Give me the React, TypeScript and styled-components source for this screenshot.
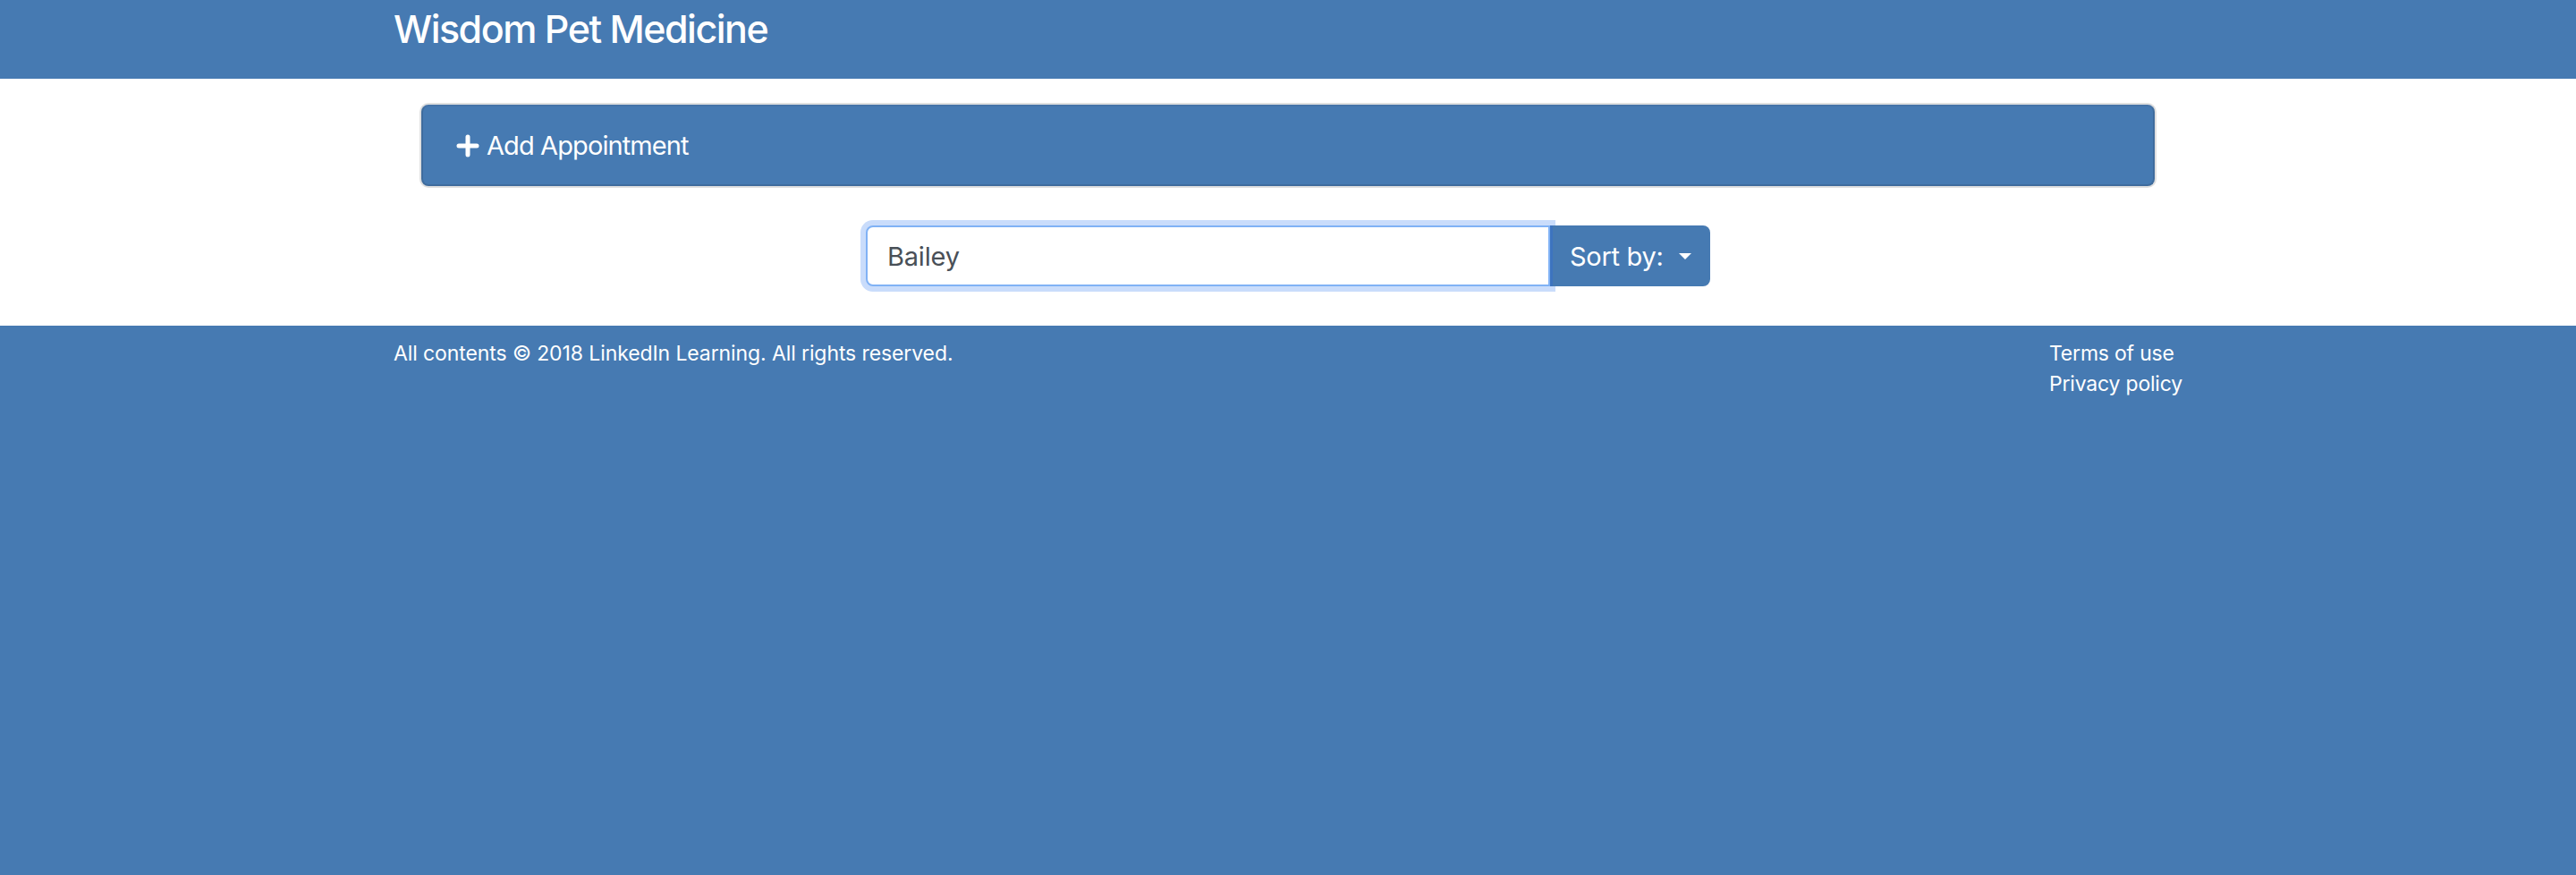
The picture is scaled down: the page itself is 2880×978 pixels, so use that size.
import React from "react";
import styled, { createGlobalStyle } from "styled-components";

const BLUE = "#467ab2";

const Global = createGlobalStyle`
  html, body { margin: 0; padding: 0; }
  body {
    background: ${BLUE};
    font-family: Inter, "Noto Sans", "Liberation Sans", sans-serif;
    -webkit-font-smoothing: antialiased;
  }
  * { box-sizing: border-box; }
`;

const Page = styled.div`
  display: flex;
  flex-direction: column;
  min-height: 978px;
`;

const Header = styled.header`
  background: ${BLUE};
  height: 88px;
`;

const Container = styled.div`
  width: 2000px;
  margin: 0 auto;
`;

const Brand = styled.h1`
  margin: 0;
  color: #fff;
  font-size: 43px;
  font-weight: 500;
  line-height: 64px;
  letter-spacing: -1.5px;
`;

const Main = styled.main`
  background: #fff;
  padding: 29px 0 44px;
`;

const Card = styled.div`
  width: 1938px;
  margin: 0 auto;
  height: 91px;
  background: ${BLUE};
  border: 2px solid #3f6c9d;
  border-top-color: #4573a8;
  border-radius: 8px;
  box-shadow: 0 0 0 2px #e0e0e0;
  display: flex;
  align-items: center;
  padding-left: 37px;
  color: #fff;
  font-size: 29px;
  letter-spacing: -0.9px;
`;

const PlusIcon = styled.svg`
  width: 26px;
  height: 26px;
  margin-right: 8px;
`;

const SearchRow = styled.div`
  display: flex;
  justify-content: center;
  margin-top: 44px;
`;

const Group = styled.div`
  display: flex;
  width: 944px;
  height: 68px;
`;

const Input = styled.input`
  flex: 1;
  height: 68px;
  border: 2px solid #80b2f5;
  border-radius: 8px 0 0 8px;
  box-shadow: 0 0 0 6px #c9dcfb;
  outline: none;
  padding: 0 22px;
  font-family: inherit;
  font-size: 29px;
  color: #495057;
  letter-spacing: -0.2px;
  position: relative;
  z-index: 1;
`;

const SortButton = styled.button`
  width: 179px;
  height: 68px;
  border: none;
  border-left: 3px solid #3d74bf;
  background: ${BLUE};
  color: #fff;
  border-radius: 0 8px 8px 0;
  font-family: inherit;
  font-size: 29px;
  letter-spacing: -0.3px;
  display: flex;
  align-items: center;
  padding: 0 0 0 19px;
  position: relative;
  z-index: 2;
`;

const Caret = styled.span`
  display: inline-block;
  margin-left: 18px;
  width: 0;
  height: 0;
  border-left: 7px solid transparent;
  border-right: 7px solid transparent;
  border-top: 7px solid #fff;
`;

const Footer = styled.footer`
  flex: 1;
  background: ${BLUE};
  padding-top: 14px;
  color: #fff;
  font-size: 23px;
  line-height: 34px;
`;

const FooterRow = styled.div`
  display: flex;
  justify-content: space-between;
`;

const Copy = styled.div`
  letter-spacing: -0.1px;
`;

const Links = styled.ul`
  list-style: none;
  margin: 0;
  padding: 0;
  width: 149px;
  letter-spacing: -0.2px;
`;

const LinkItem = styled.li`
  white-space: nowrap;
`;

export default function App() {
  return (
    <Page>
      <Global />
      <Header>
        <Container>
          <Brand>Wisdom Pet Medicine</Brand>
        </Container>
      </Header>
      <Main>
        <Card>
          <PlusIcon viewBox="0 0 26 26">
            <path d="M13 3v20M3 13h20" stroke="#fff" strokeWidth="5" strokeLinecap="round" />
          </PlusIcon>
          Add Appointment
        </Card>
        <SearchRow>
          <Group>
            <Input defaultValue="Bailey" />
            <SortButton>
              Sort by:
              <Caret />
            </SortButton>
          </Group>
        </SearchRow>
      </Main>
      <Footer>
        <Container>
          <FooterRow>
            <Copy>All contents © 2018 LinkedIn Learning. All rights reserved.</Copy>
            <Links>
              <LinkItem>Terms of use</LinkItem>
              <LinkItem>Privacy policy</LinkItem>
            </Links>
          </FooterRow>
        </Container>
      </Footer>
    </Page>
  );
}
